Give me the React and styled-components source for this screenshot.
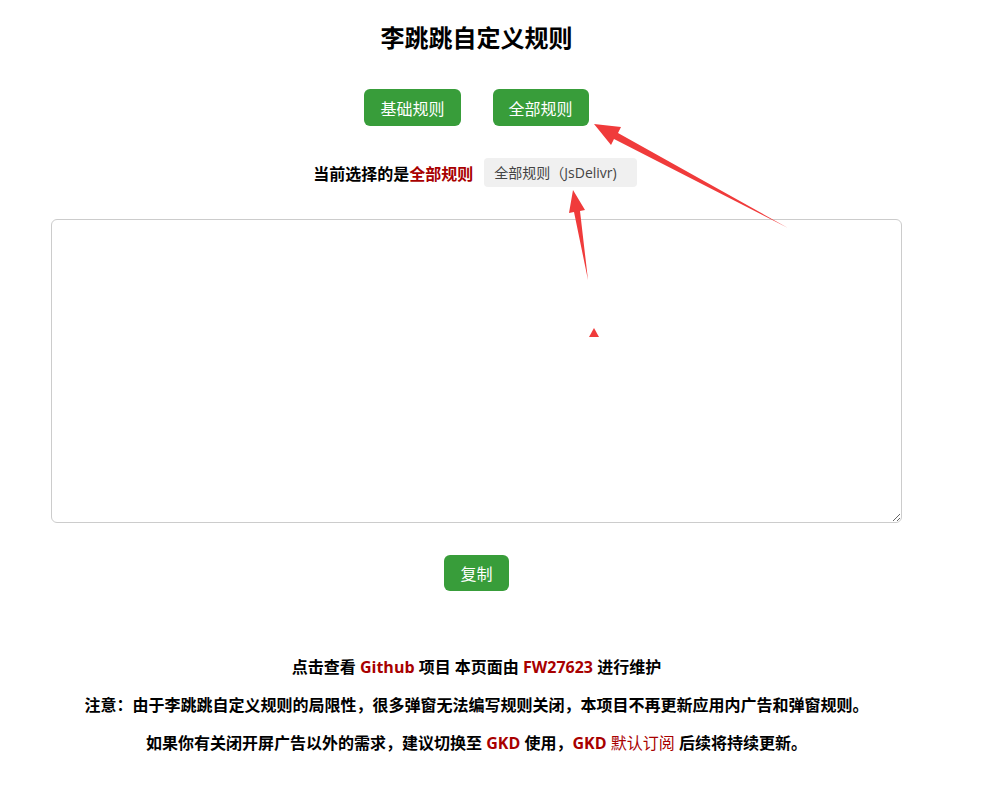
import styled, { createGlobalStyle } from "styled-components";

const GlobalStyle = createGlobalStyle`
  html, body {
    margin: 0;
    padding: 0;
    background: #ffffff;
  }
  body {
    font-family: "Open Sans", "Noto Sans CJK SC", sans-serif;
    color: #111;
  }
`;

const Page = styled.div`
  position: relative;
  width: 953px;
  display: flex;
  flex-direction: column;
  align-items: center;
`;

const Title = styled.h1`
  margin: 20px 0 0;
  font-size: 24px;
  line-height: 36px;
  font-weight: 700;
  color: #000;
`;

const ButtonRow = styled.div`
  display: flex;
  gap: 32px;
  margin-top: 33px;
`;

const GreenButton = styled.button`
  height: ${p => p.$h || 37}px;
  padding: 0 16px;
  border: none;
  border-radius: 6px;
  background: #389d3a;
  color: #fff;
  font-family: "Open Sans", "Noto Sans CJK SC", sans-serif;
  font-size: 16px;
  cursor: pointer;
`;

const SelectRow = styled.div`
  display: flex;
  align-items: center;
  gap: 11px;
  margin-top: 32px;
  margin-right: 3px;
`;

const Label = styled.span`
  font-size: 16px;
  font-weight: 700;
  color: #000;
`;

const Red = styled.span`
  color: #a80000;
  font-weight: ${p => (p.$light ? 400 : 700)};
`;

const SourceBox = styled.div`
  height: 29px;
  line-height: 29px;
  padding: 0 20px 0 10px;
  background: #f0f0f0;
  border-radius: 4px;
  font-size: 14px;
  color: #444;
`;

const Editor = styled.textarea`
  box-sizing: border-box;
  width: 851px;
  height: 304px;
  margin-top: 32px;
  border: 1px solid #cccccc;
  border-radius: 6px;
  outline: none;
`;

const CopyWrap = styled.div`
  margin-top: 32px;
`;

const Footer = styled.div`
  margin-top: 57px;
  display: flex;
  flex-direction: column;
  align-items: center;
`;

const Line = styled.p`
  margin: 0;
  font-size: 16px;
  line-height: 38px;
  font-weight: 700;
  color: #000;
  white-space: nowrap;
`;

const Overlay = styled.svg`
  position: absolute;
  left: 0;
  top: 0;
  pointer-events: none;
`;

export default function App() {
  return (
    <>
      <GlobalStyle />
      <Page>
        <Title>李跳跳自定义规则</Title>
        <ButtonRow>
          <GreenButton>基础规则</GreenButton>
          <GreenButton>全部规则</GreenButton>
        </ButtonRow>
        <SelectRow>
          <Label>
            当前选择的是<Red>全部规则</Red>
          </Label>
          <SourceBox>全部规则（JsDelivr)</SourceBox>
        </SelectRow>
        <Editor />
        <CopyWrap>
          <GreenButton $h={36}>复制</GreenButton>
        </CopyWrap>
        <Footer>
          <Line>
            点击查看 <Red>Github</Red> 项目 本页面由 <Red>FW27623</Red> 进行维护
          </Line>
          <Line>注意：由于李跳跳自定义规则的局限性，很多弹窗无法编写规则关闭，本项目不再更新应用内广告和弹窗规则。</Line>
          <Line>
            如果你有关闭开屏广告以外的需求，建议切换至 <Red>GKD</Red> 使用，<Red>GKD</Red> <Red $light>默认订阅</Red> 后续将持续更新。
          </Line>
        </Footer>
        <Overlay width="983" height="806" viewBox="0 0 983 806">
          <polygon
            fill="#f03b3b"
            points="594,124 621,127 618,133 788,228 614,139 611,145"
          />
          <polygon
            fill="#f03b3b"
            points="573,190 585,210 580,211 588,280 574,212 569,213"
          />
          <polygon fill="#f03b3b" points="589,337 599,337 594,328" />
        </Overlay>
      </Page>
    </>
  );
}
